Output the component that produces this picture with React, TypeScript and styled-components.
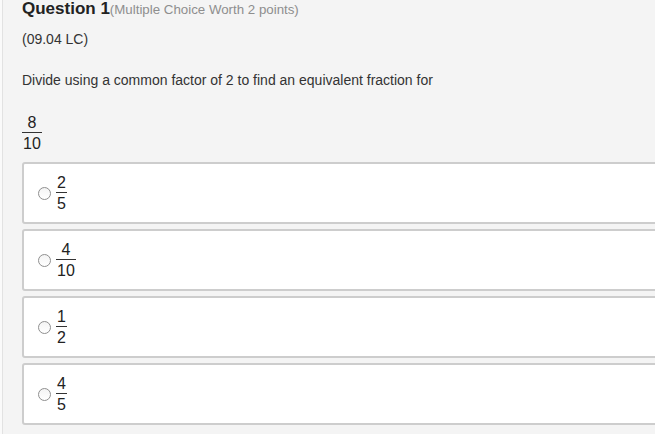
import styled, { createGlobalStyle } from 'styled-components';

const GlobalStyle = createGlobalStyle`
  html, body {
    margin: 0;
    padding: 0;
    background: #fafafa;
    overflow: hidden;
  }
  body {
    font-family: "Liberation Sans", Arial, sans-serif;
    color: #333;
  }
`;

const choices = [
  { num: '2', den: '5' },
  { num: '4', den: '10' },
  { num: '1', den: '2' },
  { num: '4', den: '5' },
];

export default function App() {
  return (
    <>
      <GlobalStyle />
      <Page>
        <Header>
          <Title>Question 1</Title>
          <Worth>(Multiple Choice Worth 2 points)</Worth>
        </Header>
        <Code>(09.04 LC)</Code>
        <Prompt>Divide using a common factor of 2 to find an equivalent fraction for</Prompt>
        <QuestionFraction>
          <Num>8</Num>
          <Den>10</Den>
        </QuestionFraction>
        <Choices>
          {choices.map((c, i) => (
            <Choice key={i}>
              <Radio type="radio" name="q1" />
              <Fraction>
                <Num>{c.num}</Num>
                <Den>{c.den}</Den>
              </Fraction>
            </Choice>
          ))}
        </Choices>
      </Page>
    </>
  );
}

const Page = styled.div`
  margin-left: 2px;
  min-height: 434px;
  background: #f4f4f4;
  border-left: 1px solid #e2e2e2;
  padding-left: 19px;
`;

const Header = styled.div`
  display: flex;
  align-items: baseline;
  line-height: 18px;
`;

const Title = styled.span`
  font-size: 17px;
  font-weight: bold;
  color: #222;
`;

const Worth = styled.span`
  font-size: 13.3px;
  color: #8e8e8e;
`;

const Code = styled.div`
  margin-top: 12px;
  font-size: 14px;
  line-height: 16px;
  color: #333;
`;

const Prompt = styled.div`
  margin-top: 25px;
  font-size: 14px;
  line-height: 16px;
  color: #333;
`;

const Fraction = styled.span`
  display: inline-flex;
  flex-direction: column;
  align-items: center;
  font-size: 16px;
  line-height: 18px;
  color: #222;
`;

const QuestionFraction = styled(Fraction)`
  margin-top: 26px;
`;

const Num = styled.span`
  padding: 0 1px;
  border-bottom: 1px solid #333;
  align-self: stretch;
  text-align: center;
`;

const Den = styled.span`
  padding: 2px 1px 0;
`;

const Choices = styled.div`
  display: flex;
  flex-direction: column;
  gap: 5px;
  margin-top: 9px;
`;

const Choice = styled.label`
  display: flex;
  align-items: center;
  gap: 5px;
  width: 660px;
  height: 62px;
  box-sizing: border-box;
  padding-left: 14px;
  background: #fff;
  border: 2px solid #cdcdcd;
  border-radius: 3px;
`;

const Radio = styled.input`
  appearance: none;
  width: 13px;
  height: 13px;
  margin: 0;
  border: 1px solid #8f8f8f;
  border-radius: 50%;
  background: linear-gradient(#f4f4f4, #fff);
  box-sizing: border-box;
`;
